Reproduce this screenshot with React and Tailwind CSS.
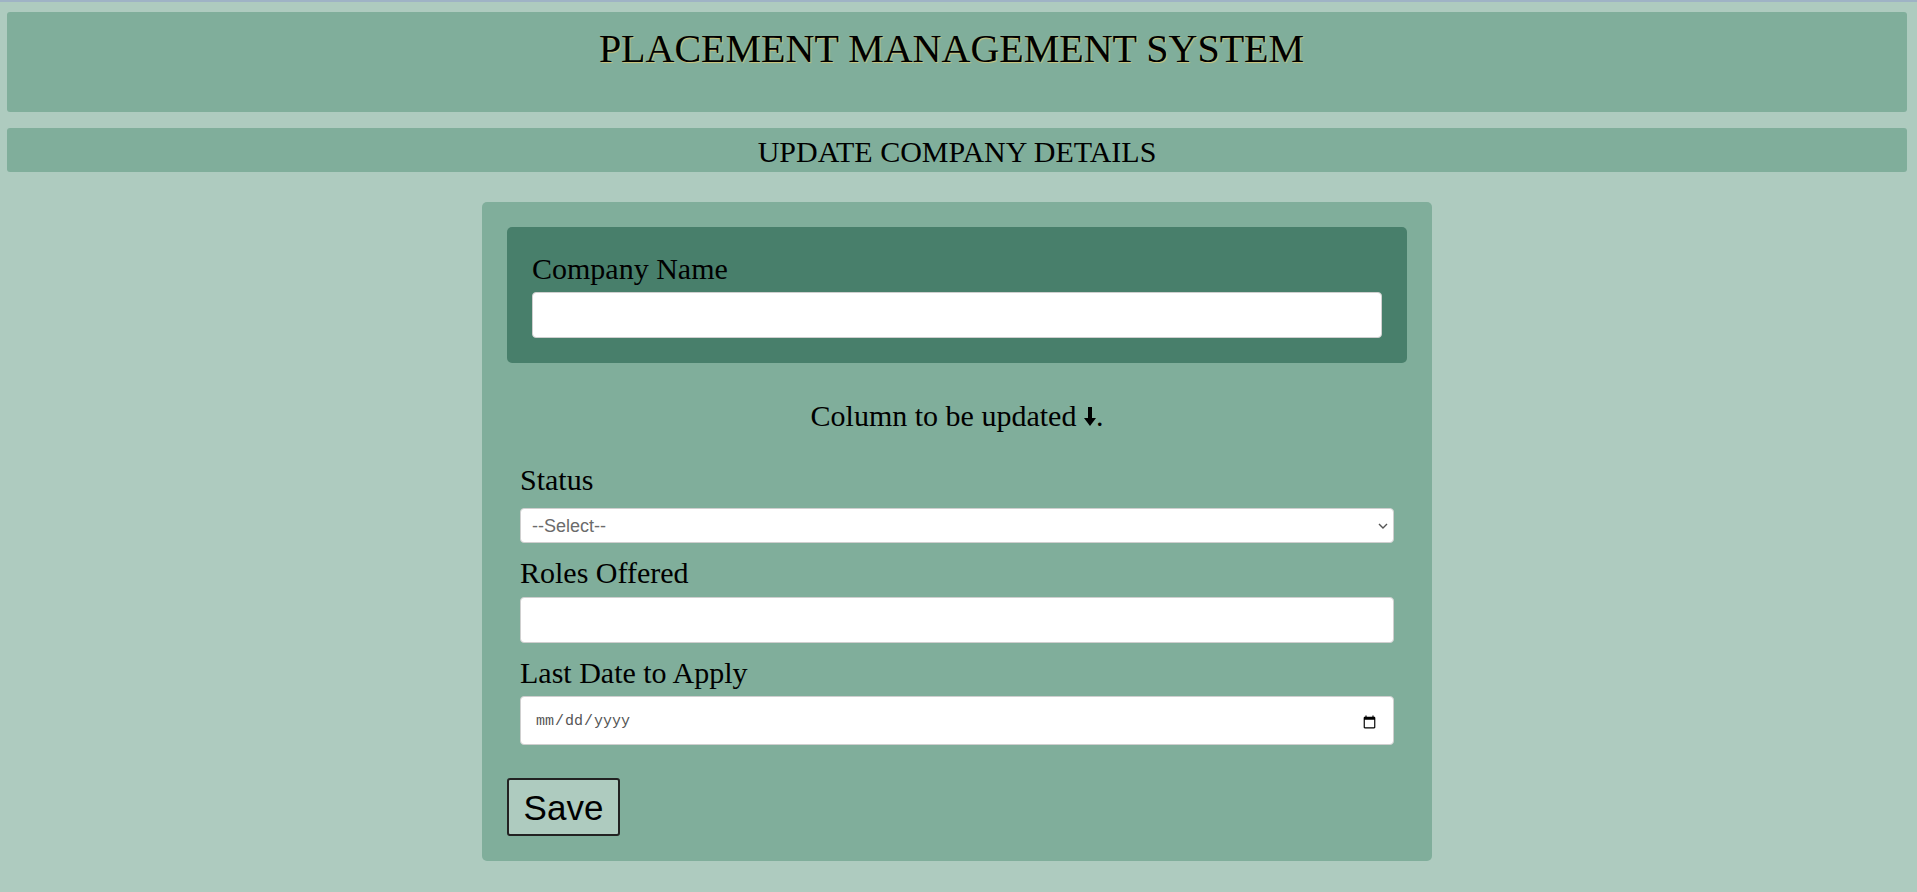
import React from "react";

export default function App() {
  return (
    <div className="min-h-screen bg-[#aecbbf] font-['Liberation_Serif',serif] text-black">
      <div className="h-[2px] bg-[#9fb3c5]" />
      <div className="pt-[10px] pl-[7px] pr-[10px]">
        <header className="h-[100px] rounded-[3px] bg-[#80ae9b] pt-[14px] pr-[11px] text-center text-[40px] leading-[46px] [text-shadow:1px_1px_1px_#cfc47a]">
          PLACEMENT MANAGEMENT SYSTEM
        </header>
        <div className="mt-[16px] h-[44px] rounded-[3px] bg-[#80ae9b] pt-[7px] text-center text-[30px] leading-[34px]">
          UPDATE COMPANY DETAILS
        </div>
      </div>

      <div className="ml-[482px] mt-[30px] w-[950px] rounded-[5px] bg-[#80ae9b] px-[25px] pt-[25px] pb-[25px]">
        <div className="rounded-[5px] bg-[#487f6b] p-[25px]">
          <label className="block text-[30px] leading-[34px]">Company Name</label>
          <input
            type="text"
            className="mt-[6px] block h-[46px] w-full rounded-[4px] border border-[#cfcfcf] bg-white px-3 outline-none"
          />
        </div>

        <div className="px-[13px]">
          <p className="mt-[36px] text-center text-[30px] leading-[34px]">
            Column to be updated{" "}
            <svg
              width="12"
              height="19"
              viewBox="0 0 12 19"
              className="inline-block align-baseline"
            >
              <path d="M4 0h4v11h4L6 19 0 11h4z" fill="#000" />
            </svg>
            .
          </p>

          <label className="mt-[30px] block text-[30px] leading-[34px]">Status</label>
          <div className="relative mt-[11px]">
            <select
              defaultValue=""
              className="block h-[35px] w-full appearance-none rounded-[4px] border border-[#cfcfcf] bg-white pl-[11px] pt-[2px] font-['Liberation_Sans',Arial,sans-serif] text-[18px] text-[#6b6b6b] outline-none"
            >
              <option value="">--Select--</option>
              <option value="open">Open</option>
              <option value="closed">Closed</option>
            </select>
            <svg
              width="10"
              height="6"
              viewBox="0 0 10 6"
              className="pointer-events-none absolute right-[6px] top-[15px]"
            >
              <path d="M1 1l4 4 4-4" fill="none" stroke="#555" strokeWidth="1.4" />
            </svg>
          </div>

          <label className="mt-[13px] block text-[30px] leading-[34px]">Roles Offered</label>
          <input
            type="text"
            className="mt-[7px] block h-[46px] w-full rounded-[4px] border border-[#cfcfcf] bg-white px-3 outline-none"
          />

          <label className="mt-[13px] block text-[30px] leading-[34px]">Last Date to Apply</label>
          <input
            type="date"
            className="mt-[6px] block h-[49px] w-full rounded-[4px] border border-[#cfcfcf] bg-white px-[14px] pt-[3px] font-['Liberation_Mono',monospace] text-[15px] text-[#555] outline-none"
          />
        </div>

        <button
          type="button"
          className="mt-[33px] block h-[58px] w-[113px] rounded-[3px] border-2 border-[#222] bg-[#aecbbf] font-['Liberation_Sans',Arial,sans-serif] text-[35px] leading-none text-black"
        >
          Save
        </button>
      </div>
    </div>
  );
}
